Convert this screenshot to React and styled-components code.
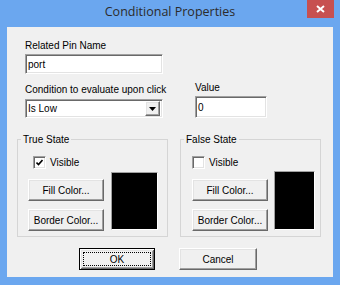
import React from "react";
import styled, { createGlobalStyle, css } from "styled-components";

const GlobalStyle = createGlobalStyle`
  html, body {
    margin: 0;
    padding: 0;
    width: 340px;
    height: 285px;
    overflow: hidden;
    background: #6ba7ef;
  }
`;

const App = () => {
  return (
    <>
      <GlobalStyle />
      <Window>
        <TitleBar>
          <span />
          <Title>Conditional Properties</Title>
          <CloseButton>
            <svg width="9" height="8" viewBox="0 0 9 8">
              <path d="M1 1 L8 7 M8 1 L1 7" stroke="#fff" strokeWidth="2" />
            </svg>
          </CloseButton>
        </TitleBar>
        <Client>
          <TopRow>
            <FieldColumn $width={138}>
              <Label>Related Pin Name</Label>
              <TextField $height={20}>port</TextField>
              <Label $top={9} $bottom={3}>
                Condition to evaluate upon click
              </Label>
              <SelectField>
                <SelectText>Is Low</SelectText>
                <DropButton>
                  <svg width="7" height="4" viewBox="0 0 7 4">
                    <path d="M0 0 H7 L3.5 4 Z" fill="#000" />
                  </svg>
                </DropButton>
              </SelectField>
            </FieldColumn>
            <FieldColumn $width={72}>
              <Label>Value</Label>
              <TextField $height={22}>0</TextField>
            </FieldColumn>
          </TopRow>

          <GroupRow>
            <StateGroup
              title="True State"
              width={151}
              pad={10}
              checkOffset={5}
              checked
              swatchW={47}
              swatchH={58}
              swatchGap={7}
            />
            <StateGroup
              title="False State"
              width={141}
              pad={11}
              checkOffset={0}
              checked={false}
              swatchW={41}
              swatchH={59}
              swatchGap={6}
            />
          </GroupRow>

          <ButtonRow>
            <Button $width={76} $default>
              OK
            </Button>
            <Button $width={78}>Cancel</Button>
          </ButtonRow>
        </Client>
      </Window>
    </>
  );
};

const StateGroup = ({
  title,
  width,
  pad,
  checkOffset,
  checked,
  swatchW,
  swatchH,
  swatchGap,
}) => (
  <Group $width={width}>
    <Legend>{title}</Legend>
    <GroupBody $pad={pad}>
      <GroupColumn>
        <CheckRow $offset={checkOffset}>
          <CheckBox>
            {checked && (
              <svg width="7" height="7" viewBox="0 0 7 7">
                <path
                  d="M0.5 3.5 L2.5 5.5 L6.5 1"
                  stroke="#000"
                  strokeWidth="1.6"
                  fill="none"
                />
              </svg>
            )}
          </CheckBox>
          <span>Visible</span>
        </CheckRow>
        <Button $width={76} $top={10}>
          Fill Color...
        </Button>
        <Button $width={76} $top={8}>
          Border Color...
        </Button>
      </GroupColumn>
      <Swatch $w={swatchW} $h={swatchH} $gap={swatchGap} />
    </GroupBody>
  </Group>
);

export default App;

const uiFont = css`
  font-family: "Liberation Sans", Arial, sans-serif;
  font-size: 10px;
  line-height: 13px;
  color: #000;
`;

const sunken = css`
  border: 1px solid;
  border-color: #a0a0a0 #ffffff #ffffff #a0a0a0;
  box-shadow: inset 1px 1px 0 #696969, inset -1px -1px 0 #e3e3e3;
`;

const raised = css`
  border: 1px solid;
  border-color: #ffffff #696969 #696969 #ffffff;
  box-shadow: inset -1px -1px 0 #a0a0a0, inset 1px 1px 0 #e3e3e3;
`;

const Window = styled.div`
  width: 340px;
  height: 285px;
  box-sizing: border-box;
  padding: 0 7px 8px 7px;
  background: #6ba7ef;
  display: flex;
  flex-direction: column;
`;

const TitleBar = styled.div`
  height: 27px;
  display: grid;
  grid-template-columns: 1fr auto 1fr;
  align-items: center;
`;

const Title = styled.div`
  font-family: "Open Sans", "Noto Sans", sans-serif;
  font-size: 12.5px;
  color: #2b2b2b;
  padding-bottom: 4px;
`;

const CloseButton = styled.div`
  justify-self: end;
  align-self: start;
  width: 27px;
  height: 18px;
  margin-right: -1px;
  background: #c75050;
  display: flex;
  align-items: center;
  justify-content: center;
`;

const Client = styled.div`
  flex: 1;
  background: #f0f0f0;
  padding: 12px 12px 0 10px;
  display: flex;
  flex-direction: column;
  ${uiFont};
`;

const TopRow = styled.div`
  display: flex;
  align-items: flex-end;
  gap: 32px;
  margin-left: 8px;
`;

const FieldColumn = styled.div`
  width: ${(p) => p.$width}px;
  display: flex;
  flex-direction: column;
`;

const Label = styled.div`
  margin-top: ${(p) => p.$top || 0}px;
  margin-bottom: ${(p) => (p.$bottom === undefined ? 2 : p.$bottom)}px;
  white-space: nowrap;
`;

const TextField = styled.div`
  ${sunken};
  box-sizing: border-box;
  height: ${(p) => p.$height}px;
  background: #fff;
  padding-left: 2px;
  display: flex;
  align-items: center;
`;

const SelectField = styled.div`
  ${sunken};
  box-sizing: border-box;
  height: 19px;
  background: #fff;
  padding: 2px;
  display: flex;
  align-items: center;
`;

const SelectText = styled.span`
  flex: 1;
`;

const DropButton = styled.div`
  ${raised};
  box-sizing: border-box;
  width: 15px;
  height: 15px;
  background: #f0f0f0;
  display: flex;
  align-items: center;
  justify-content: center;
`;

const GroupRow = styled.div`
  display: flex;
  gap: 12px;
  margin-top: 15px;
`;

const Group = styled.fieldset`
  width: ${(p) => p.$width}px;
  box-sizing: border-box;
  margin: 0;
  padding: 0 0 5px 0;
  min-width: 0;
  border: 1px solid #d5d5d5;
`;

const Legend = styled.legend`
  padding: 0 2px;
  margin-left: 3px;
  line-height: 13px;
`;

const GroupBody = styled.div`
  display: flex;
  padding: 10px 0 0 ${(p) => p.$pad}px;
`;

const GroupColumn = styled.div`
  display: flex;
  flex-direction: column;
  align-items: flex-start;
`;

const CheckRow = styled.label`
  display: flex;
  align-items: center;
  gap: 4px;
  height: 13px;
  margin-left: ${(p) => p.$offset}px;
`;

const CheckBox = styled.span`
  ${sunken};
  box-sizing: border-box;
  width: 13px;
  height: 13px;
  background: #fff;
  display: flex;
  align-items: center;
  justify-content: center;
`;

const Swatch = styled.div`
  align-self: flex-end;
  width: ${(p) => p.$w}px;
  height: ${(p) => p.$h}px;
  margin: 0 0 1px ${(p) => p.$gap}px;
  box-sizing: border-box;
  background: #000;
  border: 1px solid;
  border-color: #a0a0a0 #ffffff #ffffff #a0a0a0;
`;

const Button = styled.div`
  ${raised};
  box-sizing: border-box;
  position: relative;
  width: ${(p) => p.$width}px;
  height: 22px;
  margin-top: ${(p) => p.$top || 0}px;
  background: #f0f0f0;
  display: flex;
  align-items: center;
  justify-content: center;
  white-space: nowrap;

  ${(p) =>
    p.$default &&
    css`
      border-color: #000;
      box-shadow: inset 1px 1px 0 #fff, inset -1px -1px 0 #696969,
        inset 2px 2px 0 #e3e3e3, inset -2px -2px 0 #a0a0a0;
      &::after {
        content: "";
        position: absolute;
        inset: 3px;
        border: 1px dotted #000;
      }
    `}
`;

const ButtonRow = styled.div`
  display: flex;
  justify-content: center;
  gap: 24px;
  margin-top: 11px;
  padding-right: 2px;
`;
